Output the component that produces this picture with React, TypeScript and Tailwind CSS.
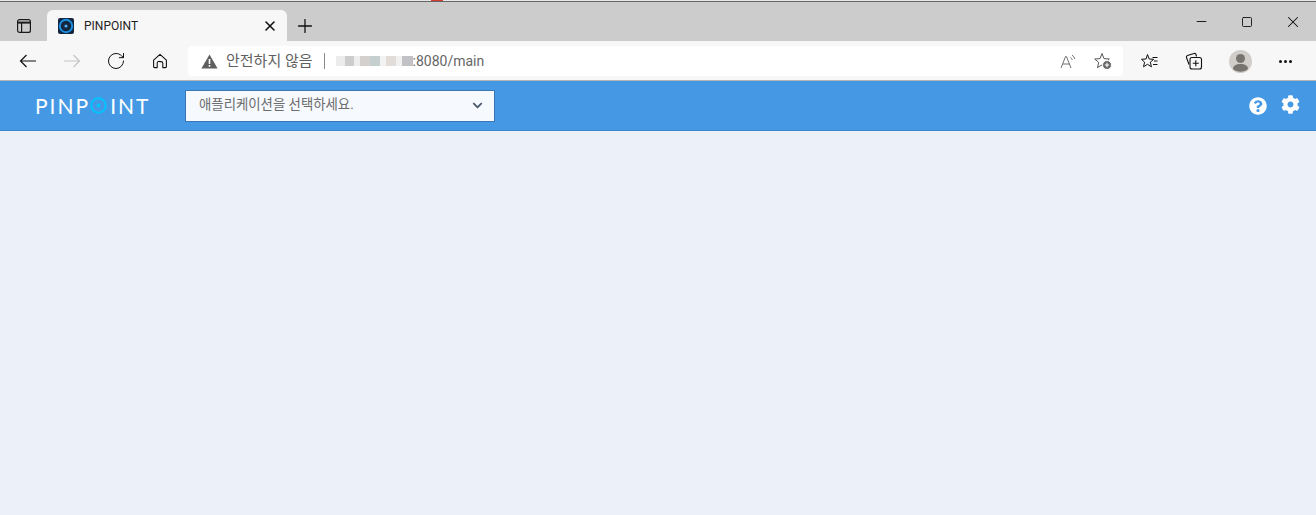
import { RotateCw, Minus, Square, X, Plus } from "lucide-react";
import { FaChevronDown, FaCog, FaQuestionCircle } from "react-icons/fa";

const sans = "font-['Roboto','Noto_Sans_CJK_KR',sans-serif]";

function TabStrip() {
  return (
    <div className="flex h-[39px] bg-[#cccccc]">
      <div className="flex w-[47px] shrink-0 items-center justify-center pt-[9px]">
        <svg width="16" height="16" viewBox="0 0 16 16" fill="none" stroke="#1a1a1a" strokeWidth="1.2">
          <rect x="1.6" y="1.6" width="12.8" height="12.8" rx="2" />
          <path d="M1.6 4.6h12.8" strokeWidth="2" />
          <path d="M5.6 4.6v9.8" />
        </svg>
      </div>
      <div className="mt-[8px] flex w-[240px] shrink-0 items-center rounded-t-[6px] bg-[#f7f7f7] pl-[11px] pr-[9px]">
        <svg width="16" height="16" viewBox="0 0 16 16">
          <rect width="16" height="16" rx="2" fill="#13253f" />
          <circle cx="8" cy="8" r="6.2" fill="none" stroke="#1d8fe0" strokeWidth="2" />
          <circle cx="8" cy="8" r="1.6" fill="#4fb0ee" />
        </svg>
        <span className={`ml-[10px] flex-1 text-[12px] text-[#222222] ${sans}`}>PINPOINT</span>
        <X size={16} strokeWidth={2.4} color="#111111" />
      </div>
      <div className="flex w-[36px] items-center justify-center pt-[9px]">
        <Plus size={22} strokeWidth={1.4} color="#111111" />
      </div>
      <div className="ml-auto flex items-center">
        <div className="flex w-[46px] justify-center">
          <Minus size={15} strokeWidth={1.5} color="#111111" />
        </div>
        <div className="flex w-[46px] justify-center">
          <Square size={12} strokeWidth={1.8} color="#111111" />
        </div>
        <div className="flex w-[46px] justify-center">
          <X size={18} strokeWidth={1.4} color="#111111" />
        </div>
      </div>
    </div>
  );
}

function AddressBar() {
  return (
    <div className="ml-[12px] flex h-[30px] w-[935px] items-center rounded-[4px] bg-white pl-[13px] pr-[11px]">
      <svg width="17" height="15" viewBox="0 0 17 15">
        <path d="M8.5 0.5 16.6 14.5H0.4Z" fill="#5f5f5f" />
        <rect x="7.7" y="5" width="1.6" height="5" fill="#ffffff" />
        <rect x="7.7" y="11" width="1.6" height="1.7" fill="#ffffff" />
      </svg>
      <span className={`ml-[8px] text-[15px] text-[#5f5f5f] ${sans}`}>안전하지 않음</span>
      <div className="ml-[11px] h-[16px] w-px bg-[#8a8a8a]" />
      <div className="ml-[11px] flex h-[10px] w-[77px] opacity-70">
        <div className="w-[9px] bg-[#e4e4e4]" />
        <div className="w-[9px] bg-[#b9b9b9]" />
        <div className="w-[6px] bg-[#e8e8e8]" />
        <div className="w-[10px] bg-[#c3bdb8]" />
        <div className="w-[10px] bg-[#afbcbc]" />
        <div className="w-[6px] bg-[#eeeeee]" />
        <div className="w-[10px] bg-[#d6d0ca]" />
        <div className="w-[6px] bg-[#ececec]" />
        <div className="w-[11px] bg-[#a9a9ae]" />
      </div>
      <span className={`text-[14px] text-[#666666] ${sans}`}>:8080/main</span>
      <div className="ml-auto flex items-center gap-[17px]">
        <svg width="17" height="16" viewBox="0 0 17 16" fill="none" stroke="#707070" strokeWidth="1">
          <path d="M1 15 5.6 3.500h.8L11 15M2.800 11h7" />
          <path d="M10.500 4.500c1 .6 1.500 1.400 1.800 2.400M12 2.200c1.600 1 2.400 2.200 2.800 3.800" />
        </svg>
        <svg width="18" height="18" viewBox="0 0 18 18" fill="none">
          <path d="M8 1.500 10 6.600l5.300.4-4 3.400 1.200 5.200L8 12.900l-4.500 2.700 1.200-5.200-4-3.400L6 6.600Z" stroke="#555555" strokeWidth="1" strokeLinejoin="round" />
          <circle cx="13" cy="13" r="4.500" fill="#666666" stroke="#ffffff" strokeWidth="1" />
          <path d="M13 10.800v4.400M10.800 13h4.400" stroke="#ffffff" strokeWidth="1.100" />
        </svg>
      </div>
    </div>
  );
}

function Toolbar() {
  return (
    <div className="flex h-[39px] items-center bg-[#f7f7f7] pt-[1px]">
      <div className="flex w-[176px] shrink-0 items-center">
        <div className="flex w-[56px] justify-center">
          <svg width="18" height="14" viewBox="0 0 18 14" fill="none" stroke="#111111" strokeWidth="1.200">
            <path d="M17 7H1.500M7.500 1 1.500 7l6 6" />
          </svg>
        </div>
        <div className="flex w-[32px] justify-center">
          <svg width="18" height="14" viewBox="0 0 18 14" fill="none" stroke="#c4c4c4" strokeWidth="1.200">
            <path d="M1 7h15.500M10.500 1l6 6-6 6" />
          </svg>
        </div>
        <div className="flex w-[56px] justify-center">
          <RotateCw size={20} strokeWidth={1.200} color="#111111" />
        </div>
        <div className="flex w-[32px] justify-center">
          <svg width="16" height="16" viewBox="0 0 16 16" fill="none" stroke="#111111" strokeWidth="1.100" strokeLinejoin="round">
            <path d="M1.600 7.200 8 1.400l6.400 5.800v6.400a1 1 0 0 1-1 1h-2.600V10a1.600 1.600 0 0 0-1.600-1.400h-1.600A1.600 1.600 0 0 0 5.200 10v4.600H2.600a1 1 0 0 1-1-1Z" />
          </svg>
        </div>
      </div>
      <AddressBar />
      <div className="flex flex-1 items-center">
        <div className="ml-[17px] flex w-[20px] justify-center">
          <svg width="18" height="17" viewBox="0 0 18 17" fill="none" stroke="#111111" strokeWidth="1" strokeLinejoin="round">
            <path d="M6.500 1.500 8.200 6l4.500.3-3.400 2.900 1.100 4.600-3.900-2.500-4 2.500 1.100-4.600L.5 6.300 5 6Z" />
            <path d="M11.500 4.500h5M13 8h3.500M12 11.500h4.500" />
          </svg>
        </div>
        <div className="ml-[25px] flex w-[18px] justify-center">
          <svg width="18" height="18" viewBox="0 0 18 18" fill="none" stroke="#111111" strokeWidth="1.100" strokeLinejoin="round">
            <path d="M4 12.500 1.500 5.500a1.500 1.500 0 0 1 1-2L9 1.500a1.500 1.500 0 0 1 2 1l.5 2" />
            <rect x="5" y="5.500" width="11.500" height="11.500" rx="2" />
            <path d="M10.800 8.200v6M7.800 11.200h6" />
          </svg>
        </div>
        <div className="ml-[26px] flex h-[23px] w-[23px] items-center justify-center rounded-full bg-[#d0cdca]">
          <svg width="23" height="23" viewBox="0 0 23 23" fill="#77736f">
            <circle cx="11.500" cy="8.500" r="4.500" />
            <path d="M4 19c0-3.500 3-5 7.500-5s7.500 1.500 7.500 5c-2 1.800-4.500 2.800-7.500 2.800S6 20.800 4 19Z" />
          </svg>
        </div>
        <div className="ml-[27px] flex gap-[2px]">
          <div className="h-[3px] w-[3px] rounded-full bg-[#111111]" />
          <div className="h-[3px] w-[3px] rounded-full bg-[#111111]" />
          <div className="h-[3px] w-[3px] rounded-full bg-[#111111]" />
        </div>
      </div>
    </div>
  );
}

function Logo() {
  return (
    <div className="flex items-center font-['Lato',sans-serif] text-[21px] font-normal leading-none tracking-[2px] text-white">
      <span>PINP</span>
      <svg width="17" height="17" viewBox="0 0 17 17" className="mr-[3px] shrink-0">
        <circle cx="8.500" cy="8.500" r="7.200" fill="none" stroke="#00c4ff" strokeWidth="2" />
        <circle cx="8.500" cy="8.500" r="2" fill="#00c4ff" />
      </svg>
      <span>INT</span>
    </div>
  );
}

function AppHeader() {
  return (
    <header className="flex h-[50px] items-center border-b border-[#3d86c8] bg-[#4599e4] pl-[35px] pr-[16px]">
      <div className="w-[150px] shrink-0">
        <Logo />
      </div>
      <div className={`flex h-[32px] w-[310px] items-center justify-between border border-[#3a78b5] bg-[#f6f9fe] pl-[13px] pr-[11px] text-[13.4px] text-[#6c6c6c] ${sans}`}>
        <span>애플리케이션을 선택하세요.</span>
        <FaChevronDown size={11} color="#4a5a70" />
      </div>
      <div className="ml-auto flex items-center gap-[14px]">
        <FaQuestionCircle size={18} color="#ffffff" />
        <FaCog size={19} color="#ffffff" className="-translate-y-px" />
      </div>
    </header>
  );
}

export default function App() {
  return (
    <div className="flex h-[515px] w-[1316px] flex-col overflow-hidden bg-[#ecf0f8]">
      <div className="flex h-px bg-[#e8e8e8]">
        <div className="ml-[431px] w-[12px] bg-[#d43a30]" />
      </div>
      <div className="h-px bg-[#666666]" />
      <TabStrip />
      <Toolbar />
      <div className="h-px bg-[#b4b4b4]" />
      <AppHeader />
    </div>
  );
}
